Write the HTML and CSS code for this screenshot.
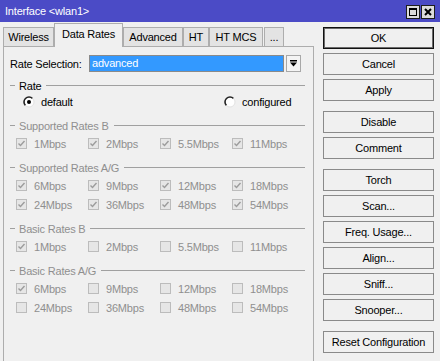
FILE: index.html
```html
<!DOCTYPE html>
<html lang="en">
<head>
    <meta charset="UTF-8">
    <meta name="viewport" content="width=device-width, initial-scale=1.0">
    <title>Interface &lt;wlan1&gt;</title>
    <link rel="stylesheet" href="styles.css">
</head>
<body>
    <div class="window">
        <div class="titlebar">
            <span class="title">Interface &lt;wlan1&gt;</span>
            <div class="title-buttons">
                <span class="tb-btn">
                    <svg width="10" height="10" viewBox="0 0 10 10"><rect x="1.5" y="1.5" width="7" height="7" fill="none" stroke="#000"/><rect x="1" y="1" width="8" height="2" fill="#000"/></svg>
                </span>
                <span class="tb-btn">
                    <svg width="10" height="10" viewBox="0 0 10 10"><path d="M2 2 L8 8 M8 2 L2 8" stroke="#000" stroke-width="2"/></svg>
                </span>
            </div>
        </div>

        <div class="content">
            <div class="main">
                <div class="tabs">
                    <div class="tab tab-wireless">Wireless</div>
                    <div class="tab tab-active">Data Rates</div>
                    <div class="tab tab-advanced">Advanced</div>
                    <div class="tab tab-ht">HT</div>
                    <div class="tab tab-htmcs">HT MCS</div>
                    <div class="tab tab-more">...</div>
                </div>

                <div class="panel">
                    <div class="field-row">
                        <label class="field-label">Rate Selection:</label>
                        <div class="select-box">advanced</div>
                        <div class="select-btn">
                            <svg width="7" height="7" viewBox="0 0 7 7"><rect x="0" y="0" width="7" height="1.5" fill="#000"/><path d="M0 2.5 H7 L3.5 6.5 Z" fill="#000"/></svg>
                        </div>
                    </div>

                    <!-- Rate -->
                    <div class="group group-first">
                        <div class="group-title"><span class="title-rate">Rate</span></div>
                        <div class="radio-row">
                            <div class="radio-item">
                                <svg class="radio" width="12" height="12" viewBox="0 0 12 12">
                                    <circle cx="6" cy="6" r="5" fill="#fff"/>
                                    <path d="M2.46 9.54 A5 5 0 0 1 9.54 2.46" fill="none" stroke="#222" stroke-width="1.6"/>
                                    <path d="M9.54 2.46 A5 5 0 0 1 2.46 9.54" fill="none" stroke="#e3e3e3" stroke-width="1"/>
                                    <circle cx="6" cy="6" r="2" fill="#000"/>
                                </svg>
                                <span>default</span>
                            </div>
                            <div class="radio-item">
                                <svg class="radio" width="12" height="12" viewBox="0 0 12 12">
                                    <circle cx="6" cy="6" r="5" fill="#fff"/>
                                    <path d="M2.46 9.54 A5 5 0 0 1 9.54 2.46" fill="none" stroke="#222" stroke-width="1.6"/>
                                    <path d="M9.54 2.46 A5 5 0 0 1 2.46 9.54" fill="none" stroke="#e3e3e3" stroke-width="1"/>
                                </svg>
                                <span>configured</span>
                            </div>
                        </div>
                    </div>

                    <div class="group disabled">
                        <div class="group-title"><span>Supported Rates B</span></div>
                        <div class="check-grid" id="supportedB"></div>
                    </div>

                    <div class="group disabled">
                        <div class="group-title"><span>Supported Rates A/G</span></div>
                        <div class="check-grid" id="supportedAG"></div>
                    </div>

                    <div class="group disabled">
                        <div class="group-title"><span>Basic Rates B</span></div>
                        <div class="check-grid" id="basicB"></div>
                    </div>

                    <div class="group disabled">
                        <div class="group-title"><span>Basic Rates A/G</span></div>
                        <div class="check-grid" id="basicAG"></div>
                    </div>
                </div>
            </div>

            <div class="actions">
                <div class="btn-group">
                    <button class="btn btn-default">OK</button>
                    <button class="btn">Cancel</button>
                    <button class="btn">Apply</button>
                </div>
                <div class="btn-group">
                    <button class="btn">Disable</button>
                    <button class="btn">Comment</button>
                </div>
                <div class="btn-group">
                    <button class="btn">Torch</button>
                    <button class="btn">Scan...</button>
                    <button class="btn">Freq. Usage...</button>
                    <button class="btn">Align...</button>
                    <button class="btn">Sniff...</button>
                    <button class="btn">Snooper...</button>
                </div>
                <div class="btn-group">
                    <button class="btn">Reset Configuration</button>
                </div>
            </div>
        </div>
    </div>

    <script>
        const rateB = ["1Mbps", "2Mbps", "5.5Mbps", "11Mbps"];
        const rateAG = ["6Mbps", "9Mbps", "12Mbps", "18Mbps", "24Mbps", "36Mbps", "48Mbps", "54Mbps"];

        const checkSvg = '<svg width="9" height="9" viewBox="0 0 9 9"><path d="M1.5 4.5 L3.5 6.5 L7.5 2" fill="none" stroke="#9c9c9c" stroke-width="1.4"/></svg>';

        function renderGrid(id, rates, checked) {
            const grid = document.getElementById(id);
            rates.forEach(rate => {
                const item = document.createElement("div");
                item.className = "check-item";
                item.innerHTML = `
                    <span class="checkbox">${checked.includes(rate) ? checkSvg : ""}</span>
                    <span>${rate}</span>
                `;
                grid.appendChild(item);
            });
        }

        renderGrid("supportedB", rateB, rateB);
        renderGrid("supportedAG", rateAG, rateAG);
        renderGrid("basicB", rateB, ["1Mbps"]);
        renderGrid("basicAG", rateAG, ["6Mbps"]);
    </script>
</body>
</html>
```

FILE: styles.css
```css
/* Base */
body {
    margin: 0;
    background-color: #f0f0f0;
    font-family: "Liberation Sans", Arial, sans-serif;
    font-size: 11px;
    letter-spacing: -0.2px;
    color: #000;
}

.window {
    width: 440px;
    height: 361px;
    display: flex;
    flex-direction: column;
    overflow: hidden;
}

/* Title bar */
.titlebar {
    height: 22px;
    flex: none;
    display: flex;
    align-items: center;
    padding-left: 5px;
    background-color: #4b4bc6;
    color: #fff;
}

.title-buttons {
    margin-left: auto;
    margin-top: 2px;
    padding-right: 5px;
    display: flex;
    gap: 1px;
}

.tb-btn {
    width: 14px;
    height: 14px;
    box-sizing: border-box;
    border: 1px solid #1e1e1e;
    background-color: #dcdcdc;
    display: flex;
    align-items: center;
    justify-content: center;
}

/* Layout */
.content {
    flex: 1;
    display: flex;
    min-height: 0;
}

.main {
    width: 311px;
    margin-left: 3px;
    margin-top: 1px;
    display: flex;
    flex-direction: column;
}

/* Tabs */
.tabs {
    height: 24px;
    margin-bottom: -1px;
    display: flex;
    align-items: flex-start;
    position: relative;
    z-index: 1;
}

.tab {
    box-sizing: border-box;
    height: 19px;
    margin-top: 4px;
    border: 1px solid #adadad;
    border-bottom: none;
    background-color: #e3e3e3;
    text-align: center;
    line-height: 18px;
}

.tab-active {
    height: 24px;
    margin-top: 0;
    padding-top: 1px;
    background-color: #f0f0f0;
    line-height: 19px;
    width: 69px;
}

.tab-wireless { width: 51px; }
.tab-advanced { width: 60px; }
.tab-ht { width: 26px; }
.tab-htmcs { width: 54px; }
.tab-more { width: 20px; margin-left: 1px; }

/* Panel */
.panel {
    flex: 1;
    border: 1px solid #adadad;
    border-bottom: none;
    padding-top: 8px;
    background-color: #f0f0f0;
}

.field-row {
    height: 17px;
    display: flex;
    align-items: center;
    padding-left: 6px;
}

.field-label {
    width: 79px;
    flex: none;
}

.select-box {
    width: 195px;
    height: 17px;
    box-sizing: border-box;
    border: 1px solid #8a8a8a;
    background-color: #3399ff;
    color: #fff;
    padding-left: 2px;
    line-height: 15px;
}

.select-btn {
    width: 15px;
    height: 17px;
    box-sizing: border-box;
    margin-left: 2px;
    border: 1px solid #a8a8a8;
    background-color: #f4f4f4;
    display: flex;
    align-items: center;
    justify-content: center;
}

/* Groups */
.group {
    margin-top: 11px;
}

.group-first {
    margin-top: 7px;
}

.group-title {
    height: 13px;
    display: flex;
    align-items: center;
    gap: 4px;
    padding: 0 8px 0 6px;
}

.group-title::before {
    content: "";
    width: 5px;
    height: 1px;
    background-color: #a0a0a0;
}

.group-title::after {
    content: "";
    flex: 1;
    height: 1px;
    margin-left: 1px;
    background-color: #a0a0a0;
}

.title-rate {
    min-width: 22px;
}

.disabled {
    color: #8f8f8f;
}

.radio-row {
    height: 13px;
    margin-top: 3px;
    padding-left: 19px;
    display: grid;
    grid-template-columns: 201px auto;
}

.radio-item {
    display: flex;
    align-items: center;
    gap: 6px;
}

.check-grid {
    margin-top: 5px;
    padding-left: 12px;
    display: grid;
    grid-template-columns: repeat(4, 72px);
    row-gap: 6px;
}

.check-item {
    height: 13px;
    display: flex;
    align-items: center;
    gap: 7px;
}

.checkbox {
    width: 11px;
    height: 11px;
    box-sizing: border-box;
    border: 1px solid #bcbcbc;
    background-color: #e6e6e6;
    display: flex;
    align-items: center;
    justify-content: center;
}

/* Buttons */
.actions {
    width: 111px;
    margin-left: 9px;
    padding-top: 5px;
    display: flex;
    flex-direction: column;
    gap: 10px;
}

.btn-group {
    display: flex;
    flex-direction: column;
    gap: 4px;
}

.btn {
    height: 22px;
    padding: 0;
    border: 1px solid #8a8a8a;
    background-color: #f0f0f0;
    font-family: inherit;
    font-size: 11px;
    letter-spacing: -0.2px;
    color: #000;
}

.btn-default {
    border-color: #111;
    box-shadow: inset 0 0 0 1px #6a6a6a;
}
```
